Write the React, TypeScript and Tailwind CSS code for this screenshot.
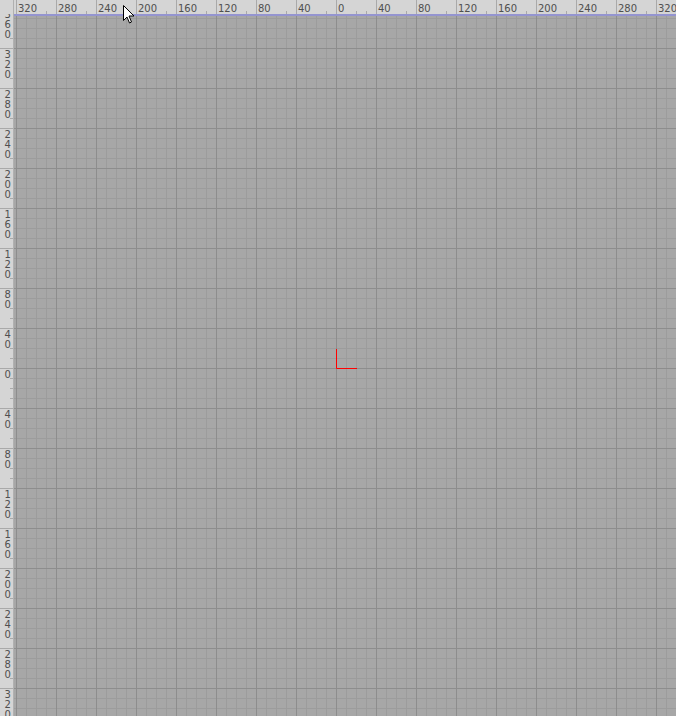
import React from 'react';

// page coordinates of the drawing origin (0,0)
const ORIGIN_X = 336;
const ORIGIN_Y = 368;
const PAGE_W = 676;
const PAGE_H = 716;
const SIDE = 14; // left ruler width
const TOP = 14; // top ruler height
const CANVAS_TOP = 16; // top ruler + accent line

const topMarks = Array.from({ length: 17 }, (_, i) => (i - 8) * 40);
const sideMarks = Array.from({ length: 18 }, (_, i) => (i - 9) * 40);

const TopRuler: React.FC = () => (
  <svg
    width={PAGE_W - SIDE}
    height={TOP}
    className="block shrink-0 font-['DejaVu_Sans',sans-serif] text-[10px]"
  >
    <rect width="100%" height="100%" fill="#d5d5d5" />
    {topMarks.map((v) => {
      const x = ORIGIN_X + v - SIDE + 0.5;
      return (
        <g key={v}>
          <line x1={x} x2={x} y1={0} y2={TOP} stroke="#a9a9a9" />
          {v === 0 && <line x1={x + 20} x2={x + 20} y1={11} y2={TOP} stroke="#a9a9a9" />}
          <line x1={x + 30} x2={x + 30} y1={11} y2={TOP} stroke="#a9a9a9" />
          <text x={x + 1.5} y={12} fill="#4f4f4f">
            {Math.abs(v)}
          </text>
        </g>
      );
    })}
  </svg>
);

const SideRuler: React.FC = () => (
  <svg
    width={SIDE}
    height={PAGE_H}
    className="block shrink-0 font-['DejaVu_Sans',sans-serif] text-[10px]"
  >
    <rect width="100%" height="100%" fill="#d5d5d5" />
    {sideMarks.map((v) => {
      const y = ORIGIN_Y + v + 0.5;
      const digits = String(Math.abs(v)).split('');
      return (
        <g key={v}>
          <line x1={0} x2={SIDE} y1={y} y2={y} stroke="#a9a9a9" />
          {digits.length < 2 && <line x1={10} x2={SIDE} y1={y + 10} y2={y + 10} stroke="#a9a9a9" />}
          {digits.length < 3 && <line x1={10} x2={SIDE} y1={y + 20} y2={y + 20} stroke="#a9a9a9" />}
          <line x1={10} x2={SIDE} y1={y + 30} y2={y + 30} stroke="#a9a9a9" />
          {digits.map((d, i) => (
            <text key={i} x={4.5} y={y + 9.5 + i * 10} fill="#4f4f4f">
              {d}
            </text>
          ))}
        </g>
      );
    })}
    {/* corner */}
    <rect x={0} y={0} width={SIDE} height={TOP} fill="#d5d5d5" />
    <line x1={13.5} x2={13.5} y1={0} y2={PAGE_H} stroke="#b0b0b0" />
  </svg>
);

const Canvas: React.FC = () => {
  const ox = ORIGIN_X - SIDE;
  const oy = ORIGIN_Y - CANVAS_TOP;
  return (
    <svg width={PAGE_W - SIDE} height={PAGE_H - CANVAS_TOP} className="block">
      <defs>
        <pattern id="gridMinor" width="10" height="10" patternUnits="userSpaceOnUse" x={ox % 10} y={oy % 10}>
          <path d="M0.5 0V10M0 0.5H10" stroke="#9c9c9c" fill="none" />
        </pattern>
        <pattern id="gridMajor" width="40" height="40" patternUnits="userSpaceOnUse" x={ox % 40} y={oy % 40}>
          <path d="M0.5 0V40M0 0.5H40" stroke="#8d8d8d" fill="none" />
        </pattern>
      </defs>
      <rect width="100%" height="100%" fill="#a7a7a7" />
      <rect width="100%" height="100%" fill="url(#gridMinor)" />
      <rect width="100%" height="100%" fill="url(#gridMajor)" />
      {/* origin axes */}
      <path
        d={`M${ox + 0.5} ${oy - 19}V${oy + 0.5}H${ox + 21}`}
        stroke="#ff0000"
        fill="none"
      />
    </svg>
  );
};

const Cursor: React.FC = () => (
  <svg width="13" height="21" viewBox="0 0 13 21" className="absolute left-[122px] top-[4px]">
    <path
      d="M1.5 1.5V16.5L5 13L7.5 19L9.5 18L7 12H12Z"
      fill="#ffffff"
      stroke="#000000"
      strokeLinejoin="round"
    />
  </svg>
);

export default function App() {
  return (
    <div className="relative flex h-[716px] w-[676px] overflow-hidden bg-[#a7a7a7]">
      <SideRuler />
      <div className="flex flex-1 flex-col">
        <TopRuler />
        <div className="h-[2px] shrink-0 bg-[#9494d0]" />
        <Canvas />
      </div>
      <Cursor />
    </div>
  );
}
